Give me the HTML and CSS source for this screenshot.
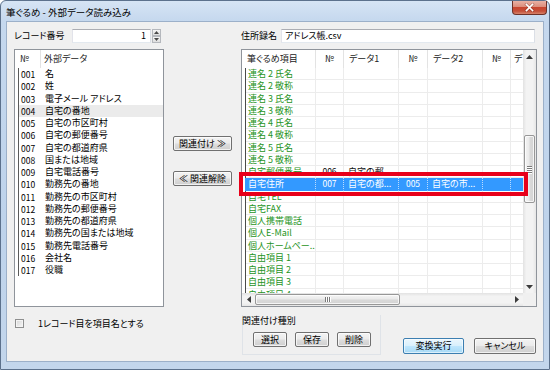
FILE: index.html
```html
<!DOCTYPE html>
<html lang="ja">
<head>
<meta charset="utf-8">
<title>筆ぐるめ - 外部データ読み込み</title>
<link rel="stylesheet" href="styles.css">
</head>
<body>
<div class="window">
  <div class="titlebar">
    <span class="title">筆ぐるめ - 外部データ読み込み</span>
    <div class="close">
      <svg width="11" height="9" viewBox="0 0 11 9"><path d="M2.5 1.5 L8.5 7.5 M8.5 1.5 L2.5 7.5" stroke="#5a1f18" stroke-width="3" stroke-linecap="square" opacity="0.35"/><path d="M2.5 1.5 L8.5 7.5 M8.5 1.5 L2.5 7.5" stroke="#ffffff" stroke-width="1.7" stroke-linecap="square"/></svg>
    </div>
  </div>
  <div class="client">
    <div class="main">
      <div class="rec-row">
        <span class="rec-lbl">レコード番号</span>
        <div class="textbox rec-box">1</div>
        <div class="spin">
          <div class="spin-btn"><svg width="5" height="3" viewBox="0 0 5 3"><path d="M0 3 L2.5 0 L5 3z" fill="#4a4a4a"/></svg></div>
          <div class="spin-btn"><svg width="5" height="3" viewBox="0 0 5 3"><path d="M0 0 L2.5 3 L5 0z" fill="#4a4a4a"/></svg></div>
        </div>
      </div>
      <div></div>
      <div class="addr-row">
        <span class="addr-lbl">住所録名</span>
        <div class="textbox addr-box">アドレス帳.csv</div>
      </div>

      <div class="listbox">
        <div class="lh">
          <span class="lh1">№</span>
          <span class="lh2">外部データ</span>
        </div>
        <div class="lbody">
          <div class="lr"><span class="ln">001</span><span class="lt">名</span></div>
          <div class="lr"><span class="ln">002</span><span class="lt">姓</span></div>
          <div class="lr"><span class="ln">003</span><span class="lt">電子メール アドレス</span></div>
          <div class="lr hl"><span class="ln">004</span><span class="lt">自宅の番地</span></div>
          <div class="lr"><span class="ln">005</span><span class="lt">自宅の市区町村</span></div>
          <div class="lr"><span class="ln">006</span><span class="lt">自宅の郵便番号</span></div>
          <div class="lr"><span class="ln">007</span><span class="lt">自宅の都道府県</span></div>
          <div class="lr"><span class="ln">008</span><span class="lt">国または地域</span></div>
          <div class="lr"><span class="ln">009</span><span class="lt">自宅電話番号</span></div>
          <div class="lr"><span class="ln">010</span><span class="lt">勤務先の番地</span></div>
          <div class="lr"><span class="ln">011</span><span class="lt">勤務先の市区町村</span></div>
          <div class="lr"><span class="ln">012</span><span class="lt">勤務先の郵便番号</span></div>
          <div class="lr"><span class="ln">013</span><span class="lt">勤務先の都道府県</span></div>
          <div class="lr"><span class="ln">014</span><span class="lt">勤務先の国または地域</span></div>
          <div class="lr"><span class="ln">015</span><span class="lt">勤務先電話番号</span></div>
          <div class="lr"><span class="ln">016</span><span class="lt">会社名</span></div>
          <div class="lr"><span class="ln">017</span><span class="lt">役職</span></div>
        </div>
      </div>

      <div class="mid">
        <div class="btn mid-btn">関連付け ≫</div>
        <div class="btn mid-btn">≪ 関連解除</div>
      </div>

      <div class="table">
        <div class="tmain">
          <div class="th">
            <span class="h h1">筆ぐるめ項目</span>
            <span class="h h2">№</span>
            <span class="h h3">データ1</span>
            <span class="h h4">№</span>
            <span class="h h5">データ2</span>
            <span class="h h6">№</span>
            <span class="h h7">デ</span>
          </div>
          <div class="tbody">
            <div class="tr"><span class="c c1">連名 2 氏名</span><span class="c c2"></span><span class="c c3"></span><span class="c c4"></span><span class="c c5"></span><span class="c c6"></span><span class="c c7"></span></div>
            <div class="tr"><span class="c c1">連名 2 敬称</span><span class="c c2"></span><span class="c c3"></span><span class="c c4"></span><span class="c c5"></span><span class="c c6"></span><span class="c c7"></span></div>
            <div class="tr"><span class="c c1">連名 3 氏名</span><span class="c c2"></span><span class="c c3"></span><span class="c c4"></span><span class="c c5"></span><span class="c c6"></span><span class="c c7"></span></div>
            <div class="tr"><span class="c c1">連名 3 敬称</span><span class="c c2"></span><span class="c c3"></span><span class="c c4"></span><span class="c c5"></span><span class="c c6"></span><span class="c c7"></span></div>
            <div class="tr"><span class="c c1">連名 4 氏名</span><span class="c c2"></span><span class="c c3"></span><span class="c c4"></span><span class="c c5"></span><span class="c c6"></span><span class="c c7"></span></div>
            <div class="tr"><span class="c c1">連名 4 敬称</span><span class="c c2"></span><span class="c c3"></span><span class="c c4"></span><span class="c c5"></span><span class="c c6"></span><span class="c c7"></span></div>
            <div class="tr"><span class="c c1">連名 5 氏名</span><span class="c c2"></span><span class="c c3"></span><span class="c c4"></span><span class="c c5"></span><span class="c c6"></span><span class="c c7"></span></div>
            <div class="tr"><span class="c c1">連名 5 敬称</span><span class="c c2"></span><span class="c c3"></span><span class="c c4"></span><span class="c c5"></span><span class="c c6"></span><span class="c c7"></span></div>
            <div class="tr"><span class="c c1">自宅郵便番号</span><span class="c c2 num">006</span><span class="c c3 dat">自宅の郵...</span><span class="c c4"></span><span class="c c5"></span><span class="c c6"></span><span class="c c7"></span></div>
            <div class="tr sel"><span class="c c1">自宅住所</span><span class="c c2 num">007</span><span class="c c3 dat">自宅の都...</span><span class="c c4 num">005</span><span class="c c5 dat">自宅の市...</span><span class="c c6"></span><span class="c c7"></span></div>
            <div class="tr"><span class="c c1">自宅TEL</span><span class="c c2"></span><span class="c c3"></span><span class="c c4"></span><span class="c c5"></span><span class="c c6"></span><span class="c c7"></span></div>
            <div class="tr"><span class="c c1">自宅FAX</span><span class="c c2"></span><span class="c c3"></span><span class="c c4"></span><span class="c c5"></span><span class="c c6"></span><span class="c c7"></span></div>
            <div class="tr"><span class="c c1">個人携帯電話</span><span class="c c2"></span><span class="c c3"></span><span class="c c4"></span><span class="c c5"></span><span class="c c6"></span><span class="c c7"></span></div>
            <div class="tr"><span class="c c1">個人E-Mail</span><span class="c c2"></span><span class="c c3"></span><span class="c c4"></span><span class="c c5"></span><span class="c c6"></span><span class="c c7"></span></div>
            <div class="tr"><span class="c c1">個人ホームペー...</span><span class="c c2"></span><span class="c c3"></span><span class="c c4"></span><span class="c c5"></span><span class="c c6"></span><span class="c c7"></span></div>
            <div class="tr"><span class="c c1">自由項目 1</span><span class="c c2"></span><span class="c c3"></span><span class="c c4"></span><span class="c c5"></span><span class="c c6"></span><span class="c c7"></span></div>
            <div class="tr"><span class="c c1">自由項目 2</span><span class="c c2"></span><span class="c c3"></span><span class="c c4"></span><span class="c c5"></span><span class="c c6"></span><span class="c c7"></span></div>
            <div class="tr"><span class="c c1">自由項目 3</span><span class="c c2"></span><span class="c c3"></span><span class="c c4"></span><span class="c c5"></span><span class="c c6"></span><span class="c c7"></span></div>
            <div class="tr"><span class="c c1">自由項目 4</span><span class="c c2"></span><span class="c c3"></span><span class="c c4"></span><span class="c c5"></span><span class="c c6"></span><span class="c c7"></span></div>
          </div>
        </div>
        <div class="vscroll">
          <div class="sb-btn"><svg width="7" height="4" viewBox="0 0 7 4"><path d="M0 4 L3.5 0 L7 4z" fill="#3c3c3c"/></svg></div>
          <div class="v-gap1"></div>
          <div class="v-thumb">
            <span class="grip-h"></span><span class="grip-h"></span><span class="grip-h"></span><span class="grip-h"></span>
          </div>
          <div class="v-gap2"></div>
          <div class="sb-btn"><svg width="7" height="4" viewBox="0 0 7 4"><path d="M0 0 L3.5 4 L7 0z" fill="#3c3c3c"/></svg></div>
        </div>
        <div class="hscroll">
          <div class="sb-btn"><svg width="4" height="7" viewBox="0 0 4 7"><path d="M4 0 L0 3.5 L4 7z" fill="#3c3c3c"/></svg></div>
          <div class="h-thumb">
            <span class="grip-v"></span><span class="grip-v"></span><span class="grip-v"></span>
          </div>
          <div class="h-gap"></div>
          <div class="sb-btn"><svg width="4" height="7" viewBox="0 0 4 7"><path d="M0 0 L4 3.5 L0 7z" fill="#3c3c3c"/></svg></div>
        </div>
        <div class="corner"></div>
        <div class="focus-box"></div>
      </div>

      <div class="check-row">
        <span class="checkbox"></span>
        <span class="check-lbl">1レコード目を項目名とする</span>
      </div>
      <div></div>
      <div class="bottom-right">
        <div class="group">
          <div class="group-lbl">関連付け種別</div>
          <div class="group-btns">
            <div class="btn small-btn">選択</div>
            <div class="btn small-btn">保存</div>
            <div class="btn small-btn">削除</div>
          </div>
        </div>
        <div class="actions">
          <div class="btn act-btn default">変換実行</div>
          <div class="btn act-btn cancel">キャンセル</div>
        </div>
      </div>
    </div>
  </div>
</div>
</body>
</html>
```

FILE: styles.css
```css
* { box-sizing: border-box; }

body {
  margin: 0;
  width: 550px;
  height: 370px;
  overflow: hidden;
  background: #ffffff;
  font-family: "Noto Sans CJK JP", "Noto Sans", sans-serif;
  font-size: 9px;
  font-feature-settings: "palt";
  color: #000;
}

.window {
  width: 550px;
  height: 370px;
  display: flex;
  flex-direction: column;
  padding: 0 5px 7px 5px;
  border: 1px solid #5c718c;
  border-radius: 6px 6px 0 0;
  background: linear-gradient(to bottom, #d6e4f4 0px, #c5d8ee 20px, #bed3eb 60%, #c3d6ec 100%);
}

.titlebar {
  height: 20px;
  display: flex;
  align-items: flex-start;
  flex-shrink: 0;
}

.title {
  margin-top: 5px;
  margin-left: 0;
  font-size: 9.5px;
  line-height: 12px;
  color: #000;
  white-space: nowrap;
}

.close {
  margin-left: auto;
  margin-right: -3px;
  width: 35px;
  height: 14px;
  border: 1px solid #6e3127;
  border-top: none;
  border-radius: 0 0 4px 4px;
  background: linear-gradient(to bottom, #e9b1a4 0%, #dc8d7c 45%, #c8452f 50%, #c5503a 78%, #d6836b 100%);
  display: flex;
  align-items: center;
  justify-content: center;
}

.client {
  flex: 1;
  background: #f0f0f0;
  border: 1px solid #9cb0c9;
  padding: 7px 6px 0 7px;
}

.main {
  display: grid;
  grid-template-columns: 150px 59px 296px;
  grid-template-rows: 14px auto 1fr;
  column-gap: 9px;
  height: 100%;
}

/* top row */
.rec-row, .addr-row {
  display: flex;
  align-items: center;
  height: 14px;
}
.rec-lbl { width: 58px; line-height: 12px; white-space: nowrap; }
.addr-lbl { width: 40px; line-height: 12px; white-space: nowrap; }

.textbox {
  height: 14px;
  background: #fff;
  border: 1px solid;
  border-color: #abadb3 #dbdfe6 #e3e9ef #e2e3ea;
  line-height: 12px;
  padding: 0 3px;
  white-space: nowrap;
}
.rec-box { width: 79px; text-align: right; padding-right: 4px; }
.addr-box { width: 254px; }

.spin {
  margin-left: 1px;
  width: 9px;
  height: 14px;
  display: flex;
  flex-direction: column;
}
.spin-btn {
  height: 7px;
  border: 1px solid #b5b8bd;
  background: linear-gradient(to bottom, #f6f6f6, #dedede);
  display: flex;
  align-items: center;
  justify-content: center;
}

/* left list */
.listbox {
  margin-top: 6px;
  height: 258px;
  border: 1px solid #8f949b;
  background: #fff;
  overflow: hidden;
}
.lh {
  height: 18px;
  display: flex;
  align-items: center;
  color: #222;
}
.lh1 {
  width: 26px;
  height: 18px;
  line-height: 18px;
  padding-left: 5px;
  border-right: 1px solid #e3e3e3;
}
.lh2 { padding-left: 3px; line-height: 18px; }

.lbody {
  background: linear-gradient(#5a5a5a, #5a5a5a) no-repeat 3px 0 / 1px 100%;
}
.lr {
  height: 12.25px;
  line-height: 12.25px;
  display: flex;
  margin-left: 4px;
  white-space: nowrap;
}
.lr.hl { background: #ebebeb; }
.ln { width: 26px; padding-left: 2px; font-size: 8.5px; }
.lt { flex: 1; }

/* middle buttons */
.mid {
  margin-top: 93px;
  display: flex;
  flex-direction: column;
  gap: 20px;
}

.btn {
  height: 15px;
  border: 1px solid #707070;
  border-radius: 2px;
  background: linear-gradient(to bottom, #f3f3f3 0%, #ebebeb 48%, #dddddd 52%, #cfcfcf 100%);
  box-shadow: inset 0 0 0 1px rgba(255,255,255,0.7);
  text-align: center;
  line-height: 13px;
  white-space: nowrap;
  color: #000;
}
.mid-btn { width: 59px; }

/* right table */
.table {
  position: relative;
  margin-top: 6px;
  height: 258px;
  border: 1px solid #8f949b;
  background: #fff;
  display: grid;
  grid-template-columns: 281px 13px;
  grid-template-rows: 243px 13px;
}
.tmain {
  overflow: hidden;
  background: #fff;
}
.th {
  height: 18px;
  display: flex;
  color: #222;
  white-space: nowrap;
}
.h {
  flex-shrink: 0;
  height: 18px;
  line-height: 18px;
  border-right: 1px solid #e3e3e3;
  overflow: hidden;
}
.h1 { width: 74px; padding-left: 5px; }
.h2 { width: 28px; text-align: center; }
.h3 { width: 55px; padding-left: 5px; }
.h4 { width: 29px; text-align: center; }
.h5 { width: 55px; padding-left: 5px; }
.h6 { width: 28px; text-align: center; }
.h7 { width: 55px; padding-left: 3px; }

.tbody {
  background: linear-gradient(#4a4a4a, #4a4a4a) no-repeat 3px 0 / 1px 100%;
}
.tr {
  height: 12.25px;
  display: flex;
  padding-left: 4px;
  white-space: nowrap;
}
.c {
  flex-shrink: 0;
  height: 12.25px;
  line-height: 11.5px;
  border-right: 1px solid #ececec;
  border-bottom: 1px solid #ececec;
  overflow: hidden;
}
.c1 { width: 70px; padding-left: 2px; color: #1f9424; }
.c2 { width: 28px; text-align: center; }
.c3 { width: 55px; padding-left: 4px; }
.c4 { width: 29px; text-align: center; }
.c5 { width: 55px; padding-left: 4px; }
.c6 { width: 28px; }
.c7 { width: 55px; }
.num { font-size: 8.5px; color: #111; }
.dat { color: #111; }

.tr.sel {
  background: linear-gradient(to right, transparent 3px, #3399ff 3px);
}
.tr.sel .c {
  color: #fff;
  border-right: 1px dotted #bcdcff;
  border-bottom-color: #3399ff;
}

/* scrollbars */
.vscroll {
  display: flex;
  flex-direction: column;
  background: linear-gradient(to right, #e2e2e2 0, #f3f3f3 25%, #f3f3f3 75%, #e6e6e6 100%);
}
.hscroll {
  display: flex;
  background: linear-gradient(to bottom, #e2e2e2 0, #f3f3f3 25%, #f3f3f3 75%, #e6e6e6 100%);
}
.sb-btn {
  width: 13px;
  height: 13px;
  flex-shrink: 0;
  display: flex;
  align-items: center;
  justify-content: center;
}
.v-gap1 { height: 72px; }
.v-gap2 { flex: 1; }
.v-thumb {
  height: 68px;
  margin: 0 1px;
  border: 1px solid #979797;
  border-radius: 2px;
  background: linear-gradient(to right, #f4f4f4 0%, #e9e9e9 48%, #d9d9d9 52%, #d4d4d4 100%);
  box-shadow: inset 0 0 0 1px rgba(255,255,255,0.75);
  display: flex;
  flex-direction: column;
  align-items: center;
  justify-content: center;
  gap: 1px;
}
.grip-h {
  width: 5px;
  height: 1px;
  background: #7a7a7a;
  box-shadow: 0 1px 0 #ffffff;
}
.h-thumb {
  width: 145px;
  margin: 1px 0;
  border: 1px solid #979797;
  border-radius: 2px;
  background: linear-gradient(to bottom, #f4f4f4 0%, #e9e9e9 48%, #d9d9d9 52%, #d4d4d4 100%);
  box-shadow: inset 0 0 0 1px rgba(255,255,255,0.75);
  display: flex;
  align-items: center;
  justify-content: center;
  gap: 1px;
}
.grip-v {
  width: 1px;
  height: 5px;
  background: #7a7a7a;
  box-shadow: 1px 0 0 #ffffff;
}
.h-gap { flex: 1; }
.corner { background: #f0f0f0; }

.focus-box {
  position: absolute;
  left: -3px;
  top: 122px;
  width: 289px;
  height: 24px;
  border: 4px solid #e8001a;
  pointer-events: none;
}

/* bottom */
.check-row {
  display: flex;
  align-items: center;
  margin-top: 12px;
  padding-left: 1px;
  height: 9px;
}
.checkbox {
  width: 9px;
  height: 9px;
  border: 1px solid #8e8f8f;
  background: linear-gradient(135deg, #d6d6d6, #f7f7f7);
  box-shadow: inset 0 0 0 1px #f4f4f4;
}
.check-lbl { margin-left: 14px; line-height: 12px; white-space: nowrap; }

.bottom-right {
  display: flex;
  align-items: flex-start;
}
.group {
  margin-left: 1px;
  margin-top: 8px;
  width: 139px;
  height: 40px;
  border: 1px solid #dfe3e8;
  border-top: none;
  padding-left: 10px;
}
.group-lbl {
  margin-left: -11px;
  line-height: 11px;
  white-space: nowrap;
}
.group-btns {
  margin-top: 6px;
  display: flex;
  gap: 8px;
}
.small-btn { width: 34px; }

.actions {
  margin-left: auto;
  margin-right: 1px;
  margin-top: 31px;
  display: flex;
  gap: 10px;
}
.act-btn { height: 16px; line-height: 14px; }
.default {
  width: 61px;
  border-color: #3c7fb1;
  background: linear-gradient(to bottom, #eaf6fd 0%, #d9f0fc 48%, #bee6fd 52%, #a7d9f5 100%);
  box-shadow: inset 0 0 0 1px rgba(255,255,255,0.6);
}
.cancel { width: 62px; }
```
